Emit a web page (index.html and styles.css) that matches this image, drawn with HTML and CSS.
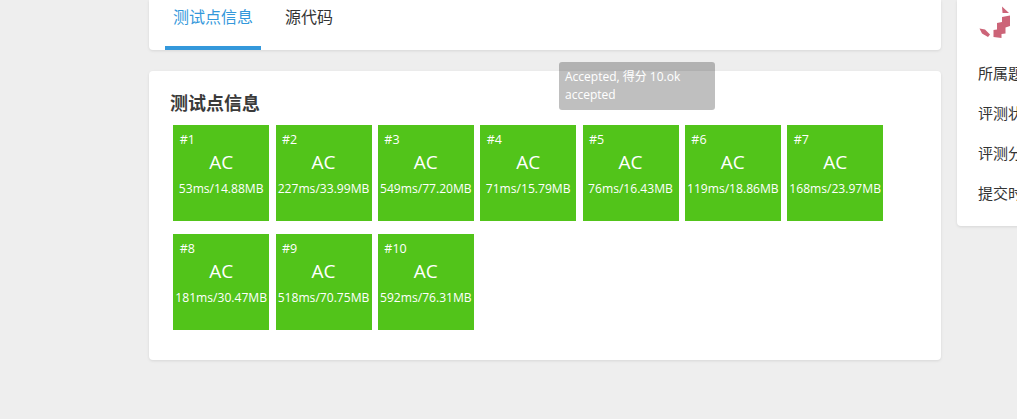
FILE: index.html
```html
<!DOCTYPE html>
<html lang="zh-CN">
<head>
  <meta charset="UTF-8" />
  <title>测试点信息</title>
  <link rel="stylesheet" href="styles.css">
</head>
<body>
  <div class="page">
    <div class="main">
      <div class="card tabs">
        <div class="tab active">测试点信息</div>
        <div class="tab">源代码</div>
      </div>

      <div class="card cases">
        <h3>测试点信息</h3>
        <div class="case-list">
          <div class="case"><span class="num">#1</span><span class="res">AC</span><span class="usage">53ms/14.88MB</span></div>
          <div class="case"><span class="num">#2</span><span class="res">AC</span><span class="usage">227ms/33.99MB</span></div>
          <div class="case"><span class="num">#3</span><span class="res">AC</span><span class="usage">549ms/77.20MB</span></div>
          <div class="case"><span class="num">#4</span><span class="res">AC</span><span class="usage">71ms/15.79MB</span></div>
          <div class="case"><span class="num">#5</span><span class="res">AC</span><span class="usage">76ms/16.43MB</span></div>
          <div class="case"><span class="num">#6</span><span class="res">AC</span><span class="usage">119ms/18.86MB</span></div>
          <div class="case"><span class="num">#7</span><span class="res">AC</span><span class="usage">168ms/23.97MB</span></div>
          <div class="case"><span class="num">#8</span><span class="res">AC</span><span class="usage">181ms/30.47MB</span></div>
          <div class="case"><span class="num">#9</span><span class="res">AC</span><span class="usage">518ms/70.75MB</span></div>
          <div class="case"><span class="num">#10</span><span class="res">AC</span><span class="usage">592ms/76.31MB</span></div>
        </div>
      </div>
    </div>

    <div class="card side">
      <svg class="logo" width="47" height="45" viewBox="0 0 47 45">
        <path d="M32 6.500 L39 13 L32.500 13 Z" />
        <path d="M32 17 L40 15.500 L40 26 L35.500 27.500 L35.500 33.500 L31.500 34 L31.500 38 L23.500 37 L23.500 30 L27 29.500 L27 23 L32 22 Z" />
        <path d="M9.500 28.500 L15 29.500 L20 34.500 L18 37 L12 33.500 Z" />
      </svg>
      <div class="row">所属题目</div>
      <div class="row">评测状态</div>
      <div class="row">评测分数</div>
      <div class="row">提交时间</div>
    </div>
  </div>

  <div class="tip">Accepted, 得分 10.ok<br>accepted</div>
</body>
</html>
```

FILE: styles.css
```css
* { margin: 0; padding: 0; box-sizing: border-box; }
html, body {
  width: 100%;
  height: 100%;
  background-color: #eee;
  font-family: "Open Sans", "Noto Sans CJK SC", sans-serif;
  color: #333;
  overflow: hidden;
}

.page {
  display: flex;
  gap: 16px;
  width: 1100px;
  padding-left: 149px;
  align-items: flex-start;
}
.main { width: 792px; flex-shrink: 0; }

.card {
  background: #fff;
  border-radius: 4px;
  box-shadow: 0 1px 3px rgba(0, 0, 0, 0.1);
}

.tabs {
  display: flex;
  gap: 16px;
  height: 50px;
  padding-left: 16px;
  border-radius: 0 0 4px 4px;
}
.tab {
  padding: 5px 8px 0;
  font-size: 16px;
  line-height: 24px;
  height: 50px;
}
.tab.active {
  color: #3498db;
  border-bottom: 4px solid #3498db;
}

.cases {
  margin-top: 21px;
  height: 289px;
  padding: 20px 21px 0;
}
.cases h3 {
  font-size: 18px;
  line-height: 24px;
  color: #3a3a3a;
}
.case-list {
  display: flex;
  flex-wrap: wrap;
  gap: 13px 6.330px;
  width: 730px;
  margin: 10px 0 0 3.200px;
}
.case {
  display: flex;
  flex-direction: column;
  align-items: center;
  width: 96px;
  height: 96px;
  padding-top: 7px;
  background: #52c41a;
  color: #fff;
}
.case .num {
  align-self: flex-start;
  padding-left: 6.500px;
  font-size: 12.500px;
  line-height: 16px;
}
.case .res {
  margin-top: 1px;
  font-size: 19px;
  line-height: 26px;
}
.case .usage {
  margin-top: 6px;
  font-size: 12.100px;
  line-height: 16px;
  white-space: nowrap;
}

.side {
  width: 200px;
  height: 226px;
  flex-shrink: 0;
  padding-left: 21px;
  border-radius: 0 0 4px 4px;
}
.logo {
  display: block;
  margin: 0 0 8px -8px;
  fill: #cc6478;
}
.row {
  font-size: 15px;
  line-height: 40px;
  white-space: nowrap;
}

/* 鼠标悬停提示 */
.tip {
  position: absolute;
  left: 559px;
  top: 62px;
  width: 156px;
  height: 48px;
  padding: 6px 6px;
  background: rgba(0, 0, 0, 0.25);
  border-radius: 3px;
  color: #fff;
  font-size: 12px;
  line-height: 18px;
}
```
